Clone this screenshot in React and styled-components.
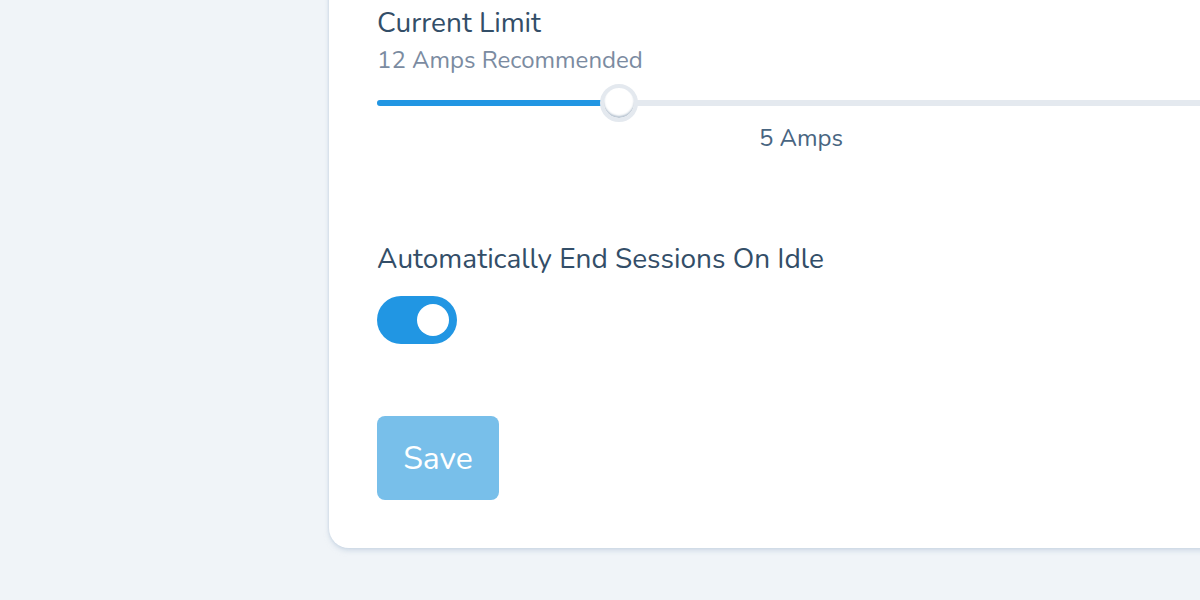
import React, { useState } from "react"
import styled, { createGlobalStyle } from "styled-components"

const GlobalStyle = createGlobalStyle`
  html, body {
    margin: 0;
    padding: 0;
    background: #f0f4f8;
    overflow: hidden;
  }
  body {
    font-family: "Nunito", "Lato", "Open Sans", sans-serif;
    color: #334e68;
  }
`

const Page = styled.div`
  display: flex;
  width: 1200px;
  height: 600px;
  overflow: hidden;
`

const SidebarSpace = styled.div`
  flex: 0 0 329px;
`

const Card = styled.section`
  flex: 0 0 944px;
  box-sizing: border-box;
  margin-top: -60px;
  align-self: flex-start;
  background: #fff;
  border-radius: 20px;
  box-shadow: 0 0 2px 1px rgba(188, 204, 220, 0.35), 0 3px 5px rgba(188, 204, 220, 0.55);
  padding: 64px 48px 48px;
  display: flex;
  flex-direction: column;
`

const Field = styled.div`
  display: flex;
  flex-direction: column;
  margin-bottom: ${p => p.gap || 0}px;
`

const Label = styled.h3`
  margin: 0;
  font-size: 28px;
  font-weight: 400;
  line-height: 38px;
  color: #334e68;
`

const Hint = styled.p`
  margin: 2px 0 0;
  font-size: 24px;
  line-height: 32px;
  color: #7b8ba1;
`

const SliderWrap = styled.div`
  margin-top: 24px;
  display: flex;
  flex-direction: column;
`

const Track = styled.div`
  position: relative;
  height: 6px;
  border-radius: 3px;
  background: #e4e9ef;
`

const Fill = styled.div`
  height: 100%;
  border-radius: 3px;
  background: #2196e3;
`

const Thumb = styled.div`
  position: absolute;
  top: 50%;
  width: 38px;
  height: 38px;
  box-sizing: border-box;
  border-radius: 50%;
  background: #fff;
  border: 4px solid #e4e9ef;
  box-shadow: inset 0 -2px 2px rgba(98, 125, 152, 0.45);
  transform: translate(-50%, -50%);
`

const ValueText = styled.div`
  margin-top: 16px;
  text-align: center;
  font-size: 24px;
  line-height: 32px;
  color: #486581;
`

const Toggle = styled.button`
  margin-top: 18px;
  width: 80px;
  height: 48px;
  border: none;
  padding: 8px;
  border-radius: 24px;
  background: ${p => (p.on ? "#2196e3" : "#cbd2d9")};
  display: flex;
  justify-content: ${p => (p.on ? "flex-end" : "flex-start")};
  cursor: pointer;
`

const Knob = styled.span`
  width: 32px;
  height: 32px;
  border-radius: 50%;
  background: #fff;
`

const SaveButton = styled.button`
  align-self: flex-start;
  width: 122px;
  height: 84px;
  border: none;
  border-radius: 8px;
  background: #78bfea;
  color: #fff;
  font-family: inherit;
  font-size: 32px;
  cursor: pointer;
`

export default function App() {
  const [idle, setIdle] = useState(true)
  const value = 5
  const pct = 28.5

  return (
    <>
      <GlobalStyle />
      <Page>
        <SidebarSpace />
        <Card>
          <Field gap={86}>
            <Label>Current Limit</Label>
            <Hint>12 Amps Recommended</Hint>
            <SliderWrap>
              <Track>
                <Fill style={{ width: `${pct}%` }} />
                <Thumb style={{ left: `${pct}%` }} />
              </Track>
              <ValueText>{value} Amps</ValueText>
            </SliderWrap>
          </Field>
          <Field gap={72}>
            <Label>Automatically End Sessions On Idle</Label>
            <Toggle on={idle ? 1 : 0} onClick={() => setIdle(!idle)}>
              <Knob />
            </Toggle>
          </Field>
          <SaveButton>Save</SaveButton>
        </Card>
      </Page>
    </>
  )
}
